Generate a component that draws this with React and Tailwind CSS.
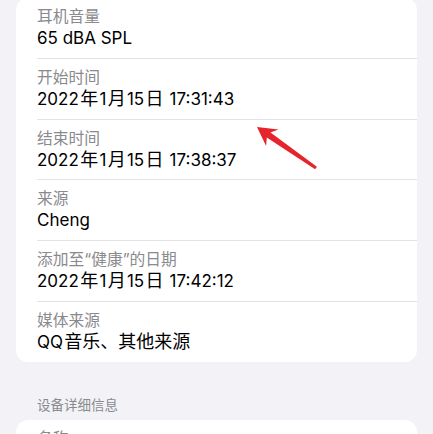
const rows = [
  { label: "耳机音量", value: "65 dBA SPL" },
  { label: "开始时间", value: "2022年1月15日 17:31:43" },
  { label: "结束时间", value: "2022年1月15日 17:38:37" },
  { label: "来源", value: "Cheng" },
  { label: "添加至“健康”的日期", value: "2022年1月15日 17:42:12" },
  { label: "媒体来源", value: "QQ音乐、其他来源" },
]

function Value({ text }) {
  const parts = text.split(/([\u3000-\u9fff]+)/).filter(Boolean)
  return (
    <div className="text-[17px] leading-[22px] text-black">
      {parts.map((p, i) =>
        /[\u3000-\u9fff]/.test(p) ? (
          <span key={i} className="px-[1.3px] text-[18px]">{p}</span>
        ) : (
          <span key={i}>{p}</span>
        )
      )}
    </div>
  )
}

function Row({ label, value, last }) {
  return (
    <div className={`pt-[9px] pb-[8.75px] ${last ? "" : "border-b border-[#e2e2e4]"}`}>
      <div className="text-[15.75px] leading-[20px] text-[#8a8a8e]">{label}</div>
      <Value text={value} />
    </div>
  )
}

export default function App() {
  return (
    <div
      className="relative h-[434px] w-[433px] overflow-hidden bg-[#f2f2f7]"
      style={{ fontFamily: 'Inter, "Noto Sans CJK SC", sans-serif' }}
    >
      {/* DETAILS CARD */}
      <div className="mx-[16px] -mt-[2px] rounded-[12px] bg-white pl-[21px]">
        {rows.map((r, i) => (
          <Row key={r.label} label={r.label} value={r.value} last={i === rows.length - 1} />
        ))}
      </div>

      {/* DEVICE SECTION */}
      <div className="mt-[34px] pl-[37px] text-[13.5px] leading-[18px] text-[#8a8a8e]">
        设备详细信息
      </div>
      <div className="mx-[16px] mt-[6px] rounded-[12px] bg-white pl-[21px] pt-[9px]">
        <div className="text-[15.75px] leading-[20px] text-[#8a8a8e]">名称</div>
        <Value text="AirPods" />
      </div>

      {/* ANNOTATION ARROW */}
      <svg
        className="pointer-events-none absolute left-0 top-0"
        width="433"
        height="434"
        viewBox="0 0 433 434"
      >
        <polygon
          fill="#e6242b"
          points="257,127 278.5,129.5 270.5,132.6 316.9,166.8 315.1,169.2 266.8,137.6 266.1,146"
        />
      </svg>
    </div>
  )
}
